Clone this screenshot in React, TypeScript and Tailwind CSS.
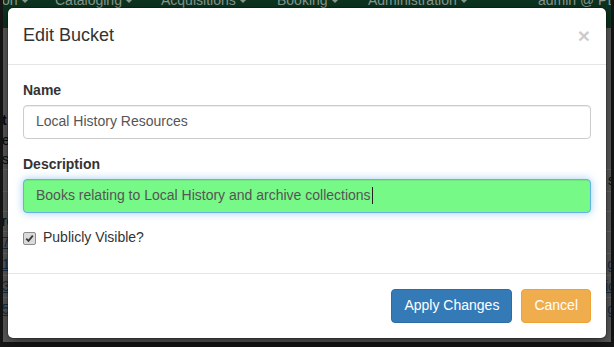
import React from "react";

const Caret = () => (
  <span className="inline-block w-0 h-0 ml-[3px] align-middle border-t-[4px] border-x-[4px] border-x-transparent border-t-current" />
);

type Row = { h: number; left?: string; right?: string; leftBold?: boolean; link?: boolean; line?: boolean };

const rows: Row[] = [
  { h: 82 },
  { h: 20, left: "t", leftBold: true },
  { h: 20, left: "e" },
  { h: 20, left: "s", line: true },
  { h: 22, right: "s", line: true },
  { h: 20, line: true },
  { h: 20, left: "re", line: true },
  { h: 22, left: "7", right: "i", link: true, line: true },
  { h: 22, left: "1", right: "g", link: true, line: true },
  { h: 22, left: "3", right: "ic", link: true, line: true },
  { h: 22, left: "5", right: "g", link: true },
];

export default function App() {
  return (
    <div className="relative w-[614px] h-[347px] overflow-hidden bg-[#161616] font-['Liberation_Sans',Arial,sans-serif]">
      {/* page behind the overlay */}
      <div className="mx-[3px] h-[342px] bg-[#5f5f5f] flex flex-col overflow-hidden">
        <div className="h-[28px] shrink-0 bg-[#0c3520] flex items-start text-[14px] text-[#8e9b93] overflow-hidden whitespace-nowrap">
          <div className="flex -mt-[10px] leading-[20px]">
            <span className="w-[53px] shrink-0 -ml-[1px]">on<Caret /></span>
            <span className="w-[106px] shrink-0">Cataloging<Caret /></span>
            <span className="w-[116px] shrink-0">Acquisitions<Caret /></span>
            <span className="w-[91px] shrink-0">Booking<Caret /></span>
            <span className="w-[170px] shrink-0">Administration<Caret /></span>
            <span className="shrink-0">admin @ PL</span>
          </div>
        </div>
        {rows.map((r, i) => (
          <div
            key={i}
            style={{ height: r.h }}
            className={`shrink-0 flex items-center justify-between text-[14px] ${r.line ? "border-b border-[#707070]" : ""}`}
          >
            <span
              className={`-ml-[1px] ${r.leftBold ? "font-bold text-[#0a0a0a]" : r.link ? "text-[#16324d] underline" : "text-[#0a0a0a]"}`}
            >
              {r.left ?? ""}
            </span>
            <span className={`-mr-[4px] ${r.link ? "text-[#16324d] underline" : "text-[#0a0a0a]"}`}>{r.right ?? ""}</span>
          </div>
        ))}
      </div>

      {/* modal dialog */}
      <div className="absolute left-[7px] top-[7px] w-[600px] bg-white rounded-[6px] border border-black/20 shadow-[0_5px_15px_rgba(0,0,0,0.5)] bg-clip-padding">
        <div className="flex items-start justify-between p-[15px] border-b border-[#e5e5e5]">
          <h4 className="m-0 text-[18px] leading-[25.7px] font-normal text-[#333]">Edit Bucket</h4>
          <button className="text-[21px] leading-[21px] font-bold text-[#000] opacity-20 mt-[2px] mr-[1px]">×</button>
        </div>

        <div className="p-[15px]">
          <div className="mb-[15px]">
            <label className="block mb-[5px] text-[14px] leading-[20px] font-bold text-[#333]">Name</label>
            <div className="h-[34px] flex items-center px-[12px] border border-[#ccc] rounded-[4px] text-[14px] text-[#555] shadow-[inset_0_1px_1px_rgba(0,0,0,0.075)]">
              Local History Resources
            </div>
          </div>
          <div className="mb-[15px]">
            <label className="block mb-[5px] text-[14px] leading-[20px] font-bold text-[#333]">Description</label>
            <div className="h-[34px] flex items-center px-[12px] border border-[#66afe9] rounded-[4px] bg-[#77f987] text-[14px] text-[#555] shadow-[inset_0_1px_1px_rgba(0,0,0,0.075),0_0_8px_rgba(102,175,233,0.6)]">
              <span>Books relating to Local History and archive collections</span>
              <span className="inline-block w-[1px] h-[17px] bg-[#222] ml-[1px]" />
            </div>
          </div>
          <div className="h-[20px] mb-[10px] flex items-center text-[14px] text-[#333]">
            <span className="w-[13px] h-[13px] mt-[1px] flex items-center justify-center border border-[#8c8c8c] bg-[#dadada] rounded-[2px]">
              <svg width="9" height="9" viewBox="0 0 9 9">
                <path d="M1.2 4.6 L3.5 6.9 L7.8 1.6" fill="none" stroke="#3a3a3a" strokeWidth="1.8" />
              </svg>
            </span>
            <span className="ml-[7px]">Publicly Visible?</span>
          </div>
        </div>

        <div className="flex justify-end gap-[9px] p-[15px] border-t border-[#e5e5e5]">
          <button className="h-[34px] px-[12px] text-[14px] text-white bg-[#337ab7] border border-[#2e6da4] rounded-[4px]">
            Apply Changes
          </button>
          <button className="h-[34px] px-[12px] text-[14px] text-white bg-[#f0ad4e] border border-[#eea236] rounded-[4px]">
            Cancel
          </button>
        </div>
      </div>
    </div>
  );
}
